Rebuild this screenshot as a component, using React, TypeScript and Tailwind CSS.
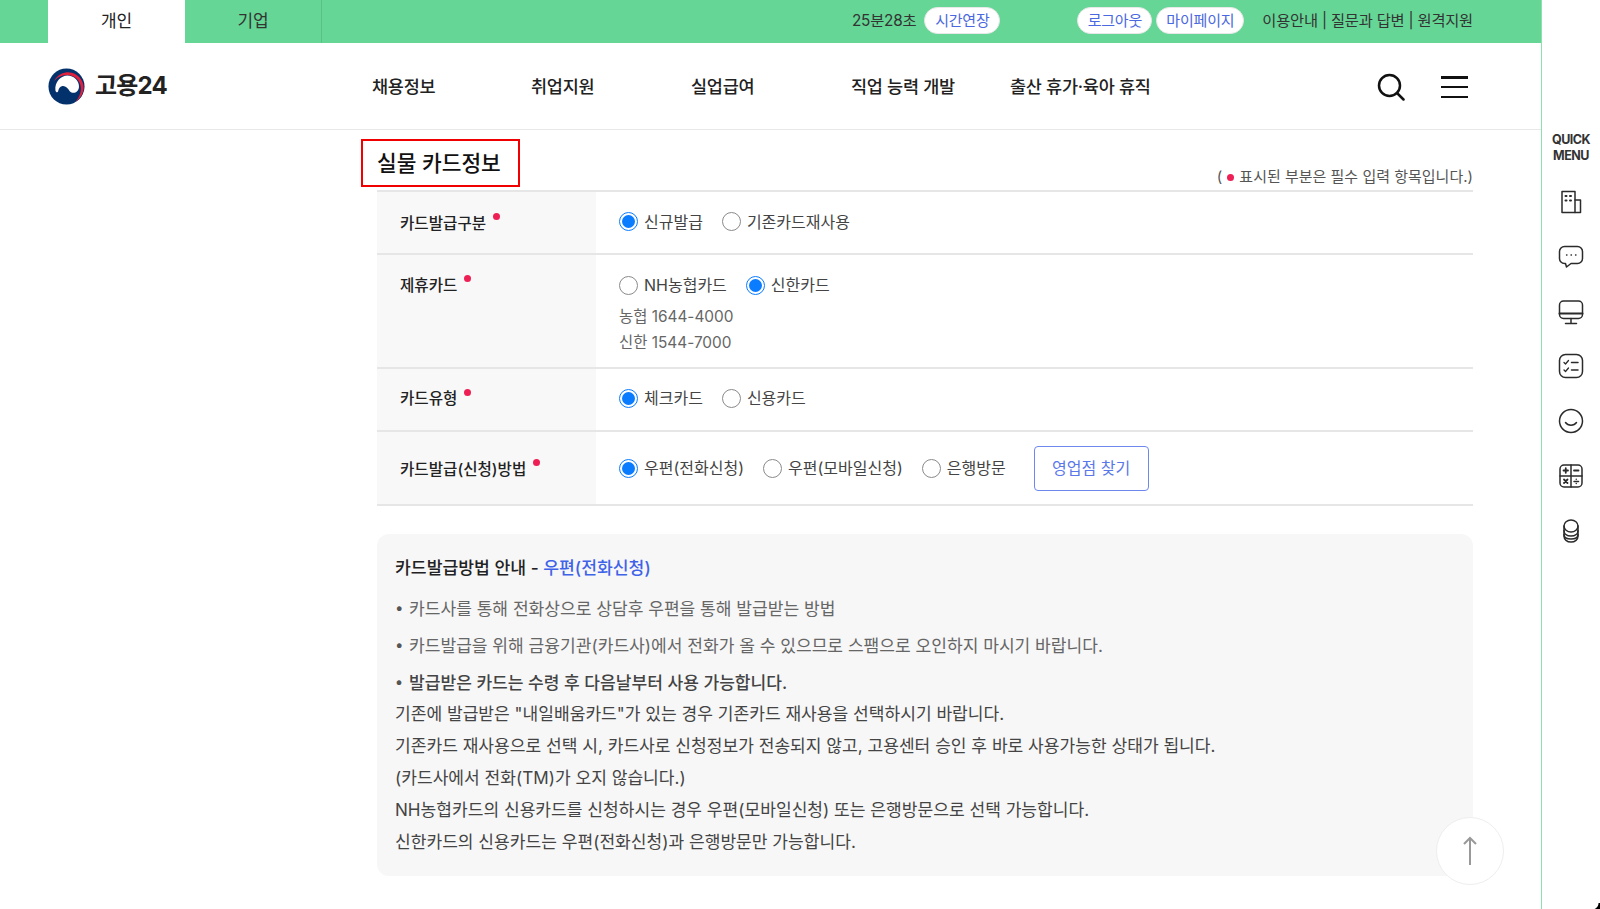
import React from "react";

const Dot = ({ className = "" }: { className?: string }) => (
  <span className={`inline-block h-[7px] w-[7px] rounded-full bg-[#ee1f55] ${className}`} />
);

const Radio = ({ label, on = false }: { label: string; on?: boolean }) => (
  <label className="flex items-center gap-[6px] text-[16px] leading-[24px] tracking-[0px] text-[#444]">
    <span className={`flex h-[19px] w-[19px] items-center justify-center rounded-full border ${on ? "border-[#0a7cff]" : "border-[#8a8a8a]"} bg-white`}>
      {on && <span className="h-[13px] w-[13px] rounded-full bg-[#0a7cff]" />}
    </span>
    {label}
  </label>
);

const Row = ({ label, labelCell, valueCell, dotClass, h, children }: { label: string; labelCell: string; valueCell: string; dotClass: string; h: string; children: React.ReactNode }) => (
  <div className={`flex border-b-2 border-[#e6e6e6] ${h}`}>
    <div className={`flex w-[219px] shrink-0 bg-[#f8f8f8] pl-[23px] ${labelCell}`}>
      <span className="text-[15.600px] font-medium leading-[24px] text-[#222]">{label}</span>
      <Dot className={dotClass} />
    </div>
    <div className={`flex-1 pl-[23px] ${valueCell}`}>{children}</div>
  </div>
);

const Bullet = ({ children, bold = false }: { children: React.ReactNode; bold?: boolean }) => (
  <li className={`flex h-[37px] items-center text-[17.080px] ${bold ? "font-medium text-[#444]" : "text-[#666]"}`}>
    <span className="w-[14px] text-[15px] text-[#555]">•</span>
    {children}
  </li>
);

const Ic = ({ children }: { children: React.ReactNode }) => (
  <svg viewBox="0 0 28 28" fill="none" stroke="#2b2b2b" strokeWidth="1.500" strokeLinecap="round" strokeLinejoin="round" className="h-[28px] w-[28px]">
    {children}
  </svg>
);

const quick = [
  <Ic key="a">
    <rect x="5" y="3.500" width="13" height="21" />
    <path d="M18 12h5.500v12.500H18" />
    <path d="M8.500 8h1M13 8h1M8.500 12.500h1M13 12.500h1" strokeWidth="2" />
  </Ic>,
  <Ic key="b">
    <path d="M7.500 3.500h13a5 5 0 0 1 5 5v7a5 5 0 0 1-5 5h-6.500l-4.500 3.500-1-3.500h-1a5 5 0 0 1-5-5v-7a5 5 0 0 1 5-5z" />
    <path d="M9.500 12h.5M14 12h.5M18.500 12h.5" strokeWidth="1.300" />
  </Ic>,
  <Ic key="c">
    <rect x="2.500" y="3" width="23" height="17.500" rx="4" />
    <path d="M2.500 15.500h23" strokeWidth="2" />
    <path d="M14 20.500v4.500M8.500 25.500h11" />
  </Ic>,
  <Ic key="d">
    <rect x="2.500" y="2.500" width="23" height="23" rx="6" />
    <path d="M7 10.500l1.500 1.500 3-3.500M7 18l1.500 1.500 3-3.500" strokeWidth="1.300" />
    <path d="M14.500 10.500h6.500M14.500 18h6.500" />
  </Ic>,
  <Ic key="e">
    <circle cx="14" cy="14" r="11.500" />
    <path d="M8.500 15.500c2.500 3.500 8.500 3.500 11 0" />
  </Ic>,
  <Ic key="f">
    <rect x="3" y="3" width="22" height="22" rx="4" />
    <path d="M14 3v22M3 14h22" />
    <path d="M6.500 8.500h4.500M8.750 6.250v4.500M17 8.500h4.500" strokeWidth="1.800" />
    <path d="M7 17.500l3.500 3.500M10.500 17.500l-3.500 3.500" strokeWidth="1.800" />
    <path d="M17 19.500h4.500M19.250 17.250v.1M19.250 21.500v.1" />
  </Ic>,
  <Ic key="g">
    <ellipse cx="14" cy="9" rx="7" ry="6" />
    <path d="M7 9v10c0 3.500 3 6 7 6s7-2.500 7-6V9" />
    <path d="M7 13.500c0 3.500 3 5.500 7 5.500s7-2 7-5.500M7 17.500c0 3.500 3 4.500 7 4.500s7-1 7-4.500" />
  </Ic>,
];

export default function App() {
  return (
    <div className="relative flex h-[909px] w-[1600px] overflow-hidden bg-white font-['Inter','Noto_Sans_CJK_KR',sans-serif]">
      <div className="flex w-[1541px] shrink-0 flex-col">
        <div className="flex h-[43px] shrink-0 items-stretch bg-[#65d695] pl-[48px] pr-[68px] text-[15.300px] leading-[40px] tracking-[-0.200px] text-[#333]">
          <div className="flex w-[137px] items-center justify-center bg-white pb-[2px] text-[17px] text-[#222]">개인</div>
          <div className="flex w-[137px] items-center justify-center border-r border-[#58c287] pb-[2px] text-[17px]">기업</div>
          <div className="ml-auto flex items-center pb-[2px]">
            <span>25분28초</span>
            <span className="ml-[8px] flex h-[27px] w-[76px] items-center justify-center rounded-full border border-[#e8e8e8] bg-white text-[15px] text-[#4a68e0]">시간연장</span>
            <span className="ml-[77px] flex h-[27px] w-[75px] items-center justify-center rounded-full border border-[#e8e8e8] bg-white text-[15px] text-[#4a68e0]">로그아웃</span>
            <span className="ml-[4px] flex h-[27px] w-[88px] items-center justify-center rounded-full border border-[#e8e8e8] bg-white text-[15px] text-[#4a68e0]">마이페이지</span>
            <span className="ml-[18px]">이용안내 | 질문과 답변 | 원격지원</span>
          </div>
        </div>

        <header className="flex h-[87px] shrink-0 items-center border-b border-[#e8e8e8] pl-[48px] pr-[73px]">
          <div className="flex w-[324px] items-center gap-[10px]">
            <svg viewBox="0 0 40 40" className="h-[37px] w-[37px]">
              <circle cx="20" cy="20" r="19.500" fill="#03316c" />
              <path d="M8 24C7 15 14 8 21 8 28 8 34 14 33.500 20.500 33 26.500 27 28.500 23.500 25 21 21.500 19 19 15.500 19.500 12.500 20 11.500 23 11 25 10.500 27 8.500 26.500 8 24z" fill="#fff" />
              <path d="M6 15C10 7 17 4.700 22 4.700 32 5 39 14 38.500 22 38 29 34 34 29 37 33 33 36 27 35.500 21 35 13 28 7.500 21 7.500 14 7.500 9 11 6 15z" fill="#e0203c" />
              <path d="M39.500 22C39 30 34 36 29 38L40 40z" fill="#fff" />
            </svg>
            <span className="text-[24px] font-bold tracking-[-0.800px] text-[#222]">고용24</span>
          </div>
          <nav className="flex flex-1 pt-[2px] text-[17.500px] font-medium tracking-[-0.250px] text-[#222]">
            <span className="w-[159px]">채용정보</span>
            <span className="w-[160px]">취업지원</span>
            <span className="w-[160px]">실업급여</span>
            <span className="w-[159px]">직업 능력 개발</span>
            <span>출산 휴가·육아 휴직</span>
          </nav>
          <svg viewBox="0 0 28 28" className="mr-[36px] mt-[2px] h-[28px] w-[28px]" fill="none" stroke="#111" strokeWidth="2.500" strokeLinecap="round">
            <circle cx="12.500" cy="12.500" r="10.500" />
            <path d="M20 20l6.500 6.500" />
          </svg>
          <div className="mt-[2px] flex h-[22px] w-[27px] flex-col justify-between">
            <span className="h-[2.500px] bg-[#111]" />
            <span className="h-[2.500px] bg-[#111]" />
            <span className="h-[2.500px] bg-[#111]" />
          </div>
        </header>

        <main className="ml-[377px] w-[1096px] pt-[9px]">
          <div className="flex h-[51px] items-start justify-between">
            <h2 className="-ml-[16px] flex h-[48px] w-[159px] items-center border-2 border-[#f00000] pl-[14px] text-[21.400px] font-medium text-[#111]">실물 카드정보</h2>
            <p className="mt-[27px] flex items-center text-[15px] leading-[22px] text-[#555]">
              ( <Dot className="mx-[5px]" />표시된 부분은 필수 입력 항목입니다.)
            </p>
          </div>
          <div className="border-t-2 border-[#e6e6e6]">
            <Row label="카드발급구분" labelCell="items-center pt-[2px]" valueCell="flex items-center" dotClass="ml-[7px] mb-[14px]" h="h-[63px]">
              <div className="mb-[2px] flex gap-[19px]"><Radio label="신규발급" on /><Radio label="기존카드재사용" /></div>
            </Row>
            <Row label="제휴카드" labelCell="pt-[19px]" valueCell="pt-[18px]" dotClass="ml-[7px] mt-[1px]" h="h-[114px]">
              <div className="flex gap-[19px]"><Radio label="NH농협카드" /><Radio label="신한카드" on /></div>
              <p className="mt-[7px] text-[15.400px] leading-[25.500px] text-[#666]">농협 1644-4000<br />신한 1544-7000</p>
            </Row>
            <Row label="카드유형" labelCell="pt-[18px]" valueCell="pt-[17px]" dotClass="ml-[7px] mt-[2px]" h="h-[63px]">
              <div className="flex gap-[19px]"><Radio label="체크카드" on /><Radio label="신용카드" /></div>
            </Row>
            <Row label="카드발급(신청)방법" labelCell="items-center pt-[3px]" valueCell="flex items-center" dotClass="ml-[7px] mb-[15px]" h="h-[74px]">
              <div className="flex items-center gap-[19px]">
                <Radio label="우편(전화신청)" on />
                <Radio label="우편(모바일신청)" />
                <Radio label="은행방문" />
                <button className="ml-[9px] h-[45px] w-[115px] rounded-[4px] border border-[#6f88ee] bg-white text-[16px] text-[#5a78ea]">영업점 찾기</button>
              </div>
            </Row>
          </div>

          <section className="mt-[28px] h-[342px] rounded-[12px] bg-[#f7f7f7] px-[18px] pt-[21px]">
            <h3 className="text-[17.200px] font-medium leading-[26px] text-[#222]">
              카드발급방법 안내 - <span className="text-[#3f63e8]">우편(전화신청)</span>
            </h3>
            <ul className="mb-[-3px] mt-[9px]">
              <Bullet>카드사를 통해 전화상으로 상담후 우편을 통해 발급받는 방법</Bullet>
              <Bullet>카드발급을 위해 금융기관(카드사)에서 전화가 올 수 있으므로 스팸으로 오인하지 마시기 바랍니다.</Bullet>
              <Bullet bold>발급받은 카드는 수령 후 다음날부터 사용 가능합니다.</Bullet>
            </ul>
            <div className="text-[17.080px] leading-[32px] text-[#444]">
              <p>기존에 발급받은 "내일배움카드"가 있는 경우 기존카드 재사용을 선택하시기 바랍니다.</p>
              <p>기존카드 재사용으로 선택 시, 카드사로 신청정보가 전송되지 않고, 고용센터 승인 후 바로 사용가능한 상태가 됩니다.</p>
              <p>(카드사에서 전화(TM)가 오지 않습니다.)</p>
              <p>NH농협카드의 신용카드를 신청하시는 경우 우편(모바일신청) 또는 은행방문으로 선택 가능합니다.</p>
              <p>신한카드의 신용카드는 우편(전화신청)과 은행방문만 가능합니다.</p>
            </div>
          </section>
        </main>
      </div>

      <aside className="flex w-[59px] shrink-0 flex-col items-center border-l border-[#8fe0b0] pt-[132px]">
        <p className="text-center text-[12.500px] font-bold leading-[16px] tracking-[-0.500px] text-[#333]">QUICK<br />MENU</p>
        <div className="mt-[24px] flex flex-col items-center gap-[26.800px]">{quick}</div>
      </aside>

      <button className="absolute left-[1436px] top-[817px] flex h-[68px] w-[68px] items-center justify-center rounded-full border border-[#eeeeee] bg-white">
        <svg viewBox="0 0 20 32" className="h-[32px] w-[20px]" fill="none" stroke="#999" strokeWidth="2">
          <path d="M10 30V3M4 9l6-6 6 6" />
        </svg>
      </button>
      <div className="absolute bottom-0 right-0 h-[6px] w-[8px] bg-[radial-gradient(circle_at_0_0,transparent_6px,#000_7px)]" />
    </div>
  );
}
